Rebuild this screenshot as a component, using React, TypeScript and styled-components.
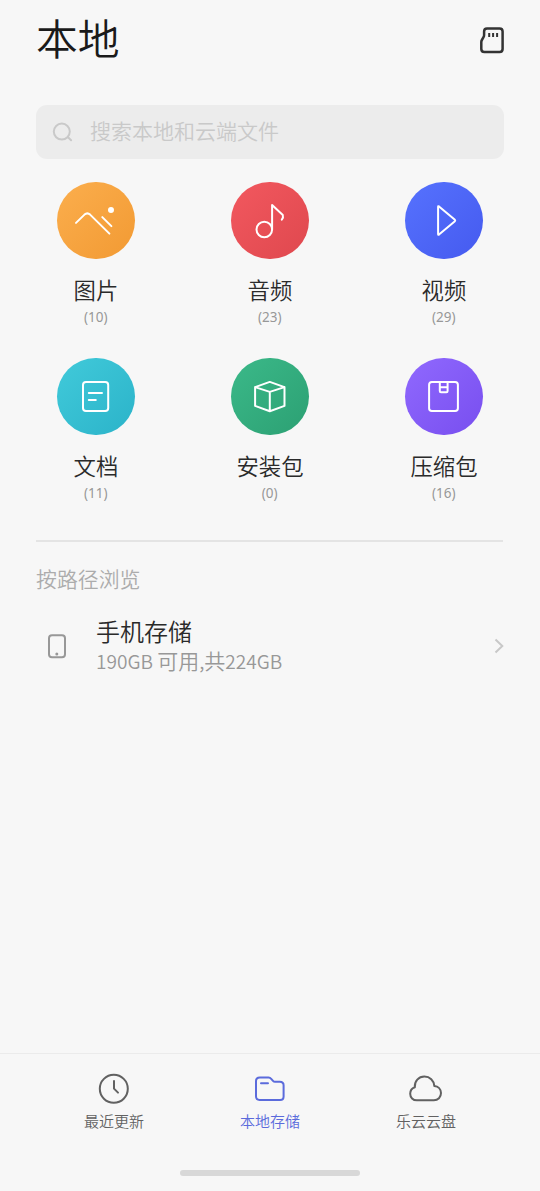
import React from "react";
import styled, { createGlobalStyle } from "styled-components";

const GlobalStyle = createGlobalStyle`
  * { box-sizing: border-box; }
  body {
    margin: 0;
    background: #f7f7f7;
    font-family: "Noto Sans CJK SC", sans-serif;
    font-weight: 350;
    color: #2a2a2a;
  }
`;

const Screen = styled.div`
  width: 540px;
  height: 1191px;
  display: flex;
  flex-direction: column;
  background: #f7f7f7;
  overflow: hidden;
`;

const Header = styled.header`
  height: 105px;
  padding: 6px 36px 0;
  display: flex;
  justify-content: space-between;
  align-items: flex-start;
`;

const Title = styled.h1`
  margin: 0;
  font-size: 41.8px;
  font-weight: 350;
  line-height: 62px;
  color: #1a1a1a;
`;

const CardButton = styled.span`
  display: flex;
  margin-top: 20px;
`;

const SearchBar = styled.div`
  flex: none;
  height: 54px;
  margin: 0 36px;
  padding: 0 16px;
  display: flex;
  align-items: center;
  gap: 16px;
  border-radius: 11px;
  background: #ececec;
  color: #c9c9c9;
  font-size: 21px;
`;

const SearchText = styled.span`
  height: 54px;
  line-height: 50px;
`;

const CategoryGrid = styled.section`
  display: grid;
  grid-template-columns: repeat(3, 174px);
  grid-auto-rows: 176px;
  justify-content: center;
  padding-top: 22.5px;
  height: 381px;
`;

const Category = styled.div`
  display: flex;
  flex-direction: column;
  align-items: center;
`;

const Disc = styled.span<{ $from: string; $to: string }>`
  width: 77.6px;
  height: 77.6px;
  margin-right: 0.6px;
  border-radius: 50%;
  background: linear-gradient(135deg, ${(p) => p.$from}, ${(p) => p.$to});
  display: flex;
`;

const CategoryName = styled.span`
  margin-top: 12.9px;
  height: 35px;
  font-size: 22.4px;
  line-height: 34px;
`;

const CategoryCount = styled.span`
  font-family: "Noto Sans", sans-serif;
  font-size: 13.5px;
  font-weight: 400;
  line-height: 20px;
  margin-right: 0.6px;
  color: #989898;
`;

const Divider = styled.hr`
  flex: none;
  width: 467px;
  height: 2px;
  margin: 0 36px;
  border: 0;
  background: #e4e4e4;
`;

const SectionTitle = styled.h2`
  margin: 20px 36px 0;
  font-size: 20.9px;
  line-height: 32px;
  font-weight: 350;
  color: #acacac;
`;

const StorageRow = styled.div`
  display: flex;
  align-items: center;
  height: 60px;
  margin: 22px 36px 0;
`;

const StorageIcon = styled.span`
  width: 60px;
  display: flex;
  padding-left: 11px;
`;

const StorageText = styled.div`
  flex: 1;
  display: flex;
  flex-direction: column;
`;

const StorageName = styled.span`
  font-size: 24px;
  line-height: 30px;
`;

const StorageDetail = styled.span`
  font-size: 21px;
  line-height: 28px;
  height: 30px;
  color: #989898;
`;

const Latin = styled.span`
  font-size: 19.1px;
  line-height: 1;
`;

const BottomBar = styled.nav`
  margin-top: auto;
  height: 138px;
  border-top: 1px solid #ebebeb;
  display: flex;
  flex-direction: column;
  align-items: center;
`;

const Tabs = styled.div`
  display: flex;
  height: 116px;
  padding-top: 17px;
`;

const Tab = styled.div<{ $active?: boolean }>`
  width: 156px;
  display: flex;
  flex-direction: column;
  align-items: center;
  color: ${(p) => (p.$active ? "#5b6bdc" : "#616161")};
`;

const TabLabel = styled.span`
  font-size: 15px;
  line-height: 24px;
  margin-top: 2px;
  height: 24px;
`;

const HomeIndicator = styled.div`
  width: 180px;
  height: 6px;
  border-radius: 3px;
  background: #d8d8d8;
`;

const DiscIcon = ({ children }: { children: React.ReactNode }) => (
  <svg width="77.6" height="77.6" viewBox="-38.8 -38.8 77.6 77.6" fill="none" stroke="#fff" strokeWidth="2" strokeLinecap="round" strokeLinejoin="round">
    {children}
  </svg>
);

const TabIcon = ({ children }: { children: React.ReactNode }) => (
  <svg width="36" height="36" viewBox="-18 -18 36 36" fill="none" stroke="currentColor" strokeWidth="2" strokeLinecap="round" strokeLinejoin="round">
    {children}
  </svg>
);

const categories = [
  {
    name: "图片", count: 10, from: "#fbae4d", to: "#f29a33",
    icon: (
      <>
        <path d="M-19.8 2.1 L-11.3 -6.2 Q-8.5 -8.7 -5.7 -6.2 L13.6 12.8" />
        <path d="M6.5 -3.7 L15.6 5.3" />
        <circle cx="15.2" cy="-10.9" r="3" fill="#fff" stroke="none" />
      </>
    ),
  },
  {
    name: "音频", count: 23, from: "#f2585f", to: "#df484e",
    icon: (
      <>
        <circle cx="-5.5" cy="8.7" r="7.8" />
        <path d="M2.3 8.7 V-15.8 L13 -5.7 Q13.8 -3.4 12 -1.1" />
      </>
    ),
  },
  {
    name: "视频", count: 29, from: "#5672fe", to: "#455aef",
    icon: <path d="M-5.7 -13.9 Q-5.7 -15.1 -4.8 -14.4 L11.1 -1 Q11.7 -.3 11.1 .4 L-4.8 13.8 Q-5.7 14.5 -5.7 13.3 Z" />,
  },
  {
    name: "文档", count: 11, from: "#41cada", to: "#2bb3c9",
    icon: (
      <>
        <rect x="-12.8" y="-14.8" width="25.2" height="29" rx="3" />
        <path d="M-7 -3.8 H6.2 M-7 3.2 H0" />
      </>
    ),
  },
  {
    name: "安装包", count: 0, from: "#3bb989", to: "#2ca073",
    icon: <path d="M0 -14.9 L14.7 -9.7 V9.1 L0 14.4 L-14.7 9.1 V-9.7 Z M-14.7 -9.7 L0 -4.9 L14.7 -9.7 M0 -4.9 V14.4" />,
  },
  {
    name: "压缩包", count: 16, from: "#9069fe", to: "#784eef",
    icon: (
      <>
        <rect x="-14.7" y="-14.8" width="28.8" height="29" rx="2.8" />
        <path d="M-4 -14.8 V-5.8 Q-4 -4.6 -2.8 -4.6 H2.6 Q3.8 -4.6 3.8 -5.8 V-14.8 M-4 -9.6 H3.8" />
      </>
    ),
  },
];

export default function App() {
  return (
    <>
      <GlobalStyle />
      <Screen>
        <Header>
          <Title>本地</Title>
          <CardButton>
            <svg width="25" height="29" viewBox="479 26 25 29" fill="none" stroke="#333" strokeWidth="2.5" strokeLinejoin="round">
              <path d="M487 28.5 H499.6 Q502.6 28.5 502.6 31.5 V49.1 Q502.6 52.1 499.6 52.1 H484.4 Q481.3 52.1 481.3 49.1 V42.2 Q481.3 41 481.9 40 L483.5 37.2 Q484.1 36.2 484.1 35 V31.5 Q484.1 28.5 487 28.5 Z" />
              <path d="M489.2 33 V37 M493.1 33 V37 M497.1 33 V37" strokeWidth="2" />
            </svg>
          </CardButton>
        </Header>

        <SearchBar>
          <svg width="22" height="22" viewBox="52 121 22 22" fill="none" stroke="currentColor" strokeWidth="2" strokeLinecap="round">
            <circle cx="61.8" cy="131.6" r="8" />
            <path d="M68.3 137.5 L71.1 140.2" />
          </svg>
          <SearchText>搜索本地和云端文件</SearchText>
        </SearchBar>

        <CategoryGrid>
          {categories.map((c) => (
            <Category key={c.name}>
              <Disc $from={c.from} $to={c.to}>
                <DiscIcon>{c.icon}</DiscIcon>
              </Disc>
              <CategoryName>{c.name}</CategoryName>
              <CategoryCount>({c.count})</CategoryCount>
            </Category>
          ))}
        </CategoryGrid>

        <Divider />
        <SectionTitle>按路径浏览</SectionTitle>

        <StorageRow>
          <StorageIcon>
            <svg width="20" height="26" viewBox="47 633 20 26" fill="none" stroke="#989898" strokeWidth="2">
              <rect x="49" y="635.3" width="16" height="22" rx="3" />
              <circle cx="56.8" cy="654" r="1.5" fill="#989898" stroke="none" />
            </svg>
          </StorageIcon>
          <StorageText>
            <StorageName>手机存储</StorageName>
            <StorageDetail>
              <Latin>190GB </Latin>可用<Latin>,</Latin>共<Latin>224GB</Latin>
            </StorageDetail>
          </StorageText>
          <svg width="10" height="16" viewBox="494 638.5 10 16" fill="none" stroke="#c8c8c8" strokeWidth="2">
            <path d="M495.5 640 L502.3 646.5 L495.5 653" />
          </svg>
        </StorageRow>

        <BottomBar>
          <Tabs>
            <Tab>
              <TabIcon>
                <circle cx="-.2" cy="-.2" r="14" />
                <path d="M0 -8 V-.4 L4 3.6" />
              </TabIcon>
              <TabLabel>最近更新</TabLabel>
            </Tab>
            <Tab $active>
              <TabIcon>
                <path d="M-10.2 -11.5 H-1.4 Q.1 -11.5 1.2 -10.2 L3 -8.1 Q3.8 -7.2 5 -7.2 H9.8 Q13.6 -7.2 13.6 -3.7 V7.4 Q13.6 10.9 10.1 10.9 H-10.4 Q-14 10.9 -14 7.3 V-7.9 Q-14 -11.5 -10.2 -11.5 Z M-9 -5.7 H-2" />
              </TabIcon>
              <TabLabel>本地存储</TabLabel>
            </Tab>
            <Tab>
              <TabIcon>
                <path d="M-11.2 -1.8 C-11.6 -7.9 -7.4 -12.4 -1.6 -12.4 C3.9 -12.4 7.9 -8.3 8.3 -3.1 C12.1 -2.7 15 .2 15 4.1 C15 8.1 12 11.3 7.9 11.3 H-9.2 C-13 11.3 -15.8 8.5 -15.8 4.7 C-15.8 1.5 -14 -.8 -11.2 -1.8 Z" />
              </TabIcon>
              <TabLabel>乐云云盘</TabLabel>
            </Tab>
          </Tabs>
          <HomeIndicator />
        </BottomBar>
      </Screen>
    </>
  );
}
